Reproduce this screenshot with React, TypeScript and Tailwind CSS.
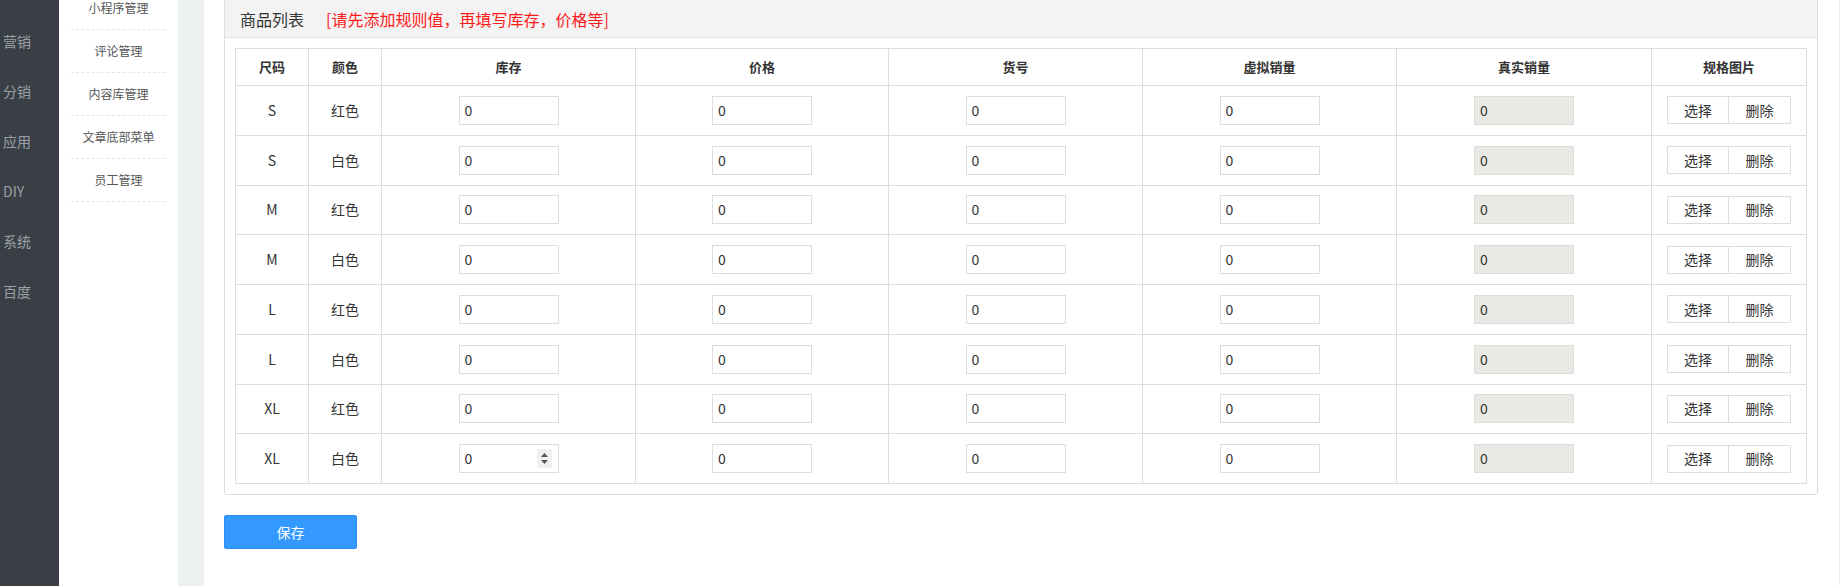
const mainMenu = ["营销", "分销", "应用", "DIY", "系统", "百度"];
const subMenu = ["小程序管理", "评论管理", "内容库管理", "文章底部菜单", "员工管理"];

const rows = [
  { size: "S", color: "红色" },
  { size: "S", color: "白色" },
  { size: "M", color: "红色" },
  { size: "M", color: "白色" },
  { size: "L", color: "红色" },
  { size: "L", color: "白色" },
  { size: "XL", color: "红色" },
  { size: "XL", color: "白色" },
];

const cols = ["尺码", "颜色", "库存", "价格", "货号", "虚拟销量", "真实销量", "规格图片"];
const widths = ["w-[73px]", "w-[73px]", "w-[254px]", "w-[253px]", "w-[254px]", "w-[254px]", "w-[255px]", "w-[155px]"];

function Field({ readOnly, spinner }: { readOnly?: boolean; spinner?: boolean }) {
  return (
    <div
      className={
        "relative mx-auto flex h-[29px] w-[100px] items-center border border-[#dddddd] pl-[5px] text-[14px] text-[#333] " +
        (readOnly ? "bg-[#ebe9e3]" : "bg-white")
      }
    >
      0
      {spinner && (
        <div className="absolute right-[6px] top-[4px] flex h-[19px] w-[15px] flex-col items-center justify-center gap-[3px] bg-[#f0f0f0]">
          <svg width="7" height="4" viewBox="0 0 7 4">
            <path d="M0 4 L3.5 0 L7 4 Z" fill="#555" />
          </svg>
          <svg width="7" height="4" viewBox="0 0 7 4">
            <path d="M0 0 L3.5 4 L7 0 Z" fill="#555" />
          </svg>
        </div>
      )}
    </div>
  );
}

export default function App() {
  return (
    <div
      className="flex h-screen w-full overflow-hidden bg-[#eef1f2]"
      style={{ fontFamily: '"Noto Sans CJK SC", "Noto Sans", sans-serif' }}
    >
      {/* main nav */}
      <nav className="w-[59px] shrink-0 bg-[#3a3f46] pt-[16px]">
        <ul className="flex flex-col">
          {mainMenu.map((m) => (
            <li key={m} className="flex h-[50px] items-center pl-[3px] text-[14px] text-[#9aa0a8]">
              {m}
            </li>
          ))}
        </ul>
      </nav>

      {/* sub nav */}
      <aside className="w-[119px] shrink-0 bg-white">
        <ul className="-mt-[13px] flex flex-col px-[12px]">
          {subMenu.map((s) => (
            <li
              key={s}
              className="flex h-[43px] items-center justify-center border-b border-dashed border-[#e4e4e4] text-[12px] text-[#555]"
            >
              {s}
            </li>
          ))}
        </ul>
      </aside>

      <div className="w-[26px] shrink-0 bg-[#eef1f2]" />

      {/* content */}
      <main className="flex-1 bg-white pl-[20px] pr-[21px]">
        <div className="-mt-[2px] rounded-[3px] border border-[#dddddd] bg-white">
          <div className="flex h-[39px] items-center gap-[22px] border-b border-[#e5e5e5] bg-[#f3f3f3] pl-[15px] pt-[2px] text-[16px]">
            <span className="text-[#333]">商品列表</span>
            <span className="text-[#ff1a1a]">[请先添加规则值，再填写库存，价格等]</span>
          </div>
          <div className="px-[10px] pb-[10px] pt-[10px]">
            <table className="w-full table-fixed border-collapse text-[14px] text-[#333]">
              <colgroup>
                {widths.map((w, i) => (
                  <col key={i} className={w} />
                ))}
              </colgroup>
              <thead>
                <tr className="h-[37px]">
                  {cols.map((c) => (
                    <th key={c} className="border border-[#dddddd] text-center text-[13px] font-bold text-[#333]">
                      {c}
                    </th>
                  ))}
                </tr>
              </thead>
              <tbody>
                {rows.map((r, i) => (
                  <tr key={i} className="h-[49.75px]">
                    <td className="border border-[#dddddd] text-center">{r.size}</td>
                    <td className="border border-[#dddddd] text-center">{r.color}</td>
                    <td className="border border-[#dddddd]">
                      <Field spinner={i === rows.length - 1} />
                    </td>
                    <td className="border border-[#dddddd]">
                      <Field />
                    </td>
                    <td className="border border-[#dddddd]">
                      <Field />
                    </td>
                    <td className="border border-[#dddddd]">
                      <Field />
                    </td>
                    <td className="border border-[#dddddd]">
                      <Field readOnly />
                    </td>
                    <td className="border border-[#dddddd]">
                      <div className="flex justify-center">
                        <button className="h-[28px] w-[62px] border border-[#dddddd] bg-white text-[14px] text-[#333]">
                          选择
                        </button>
                        <button className="h-[28px] w-[62px] border border-l-0 border-[#dddddd] bg-white text-[14px] text-[#333]">
                          删除
                        </button>
                      </div>
                    </td>
                  </tr>
                ))}
              </tbody>
            </table>
          </div>
        </div>

        <button className="mt-[20px] h-[34px] w-[133px] rounded-[2px] border border-[#2a8cf0] bg-[#3399ff] text-[14px] text-white">
          保存
        </button>
      </main>

      <div className="w-[3px] shrink-0 bg-[#eef1f2]" />
    </div>
  );
}
